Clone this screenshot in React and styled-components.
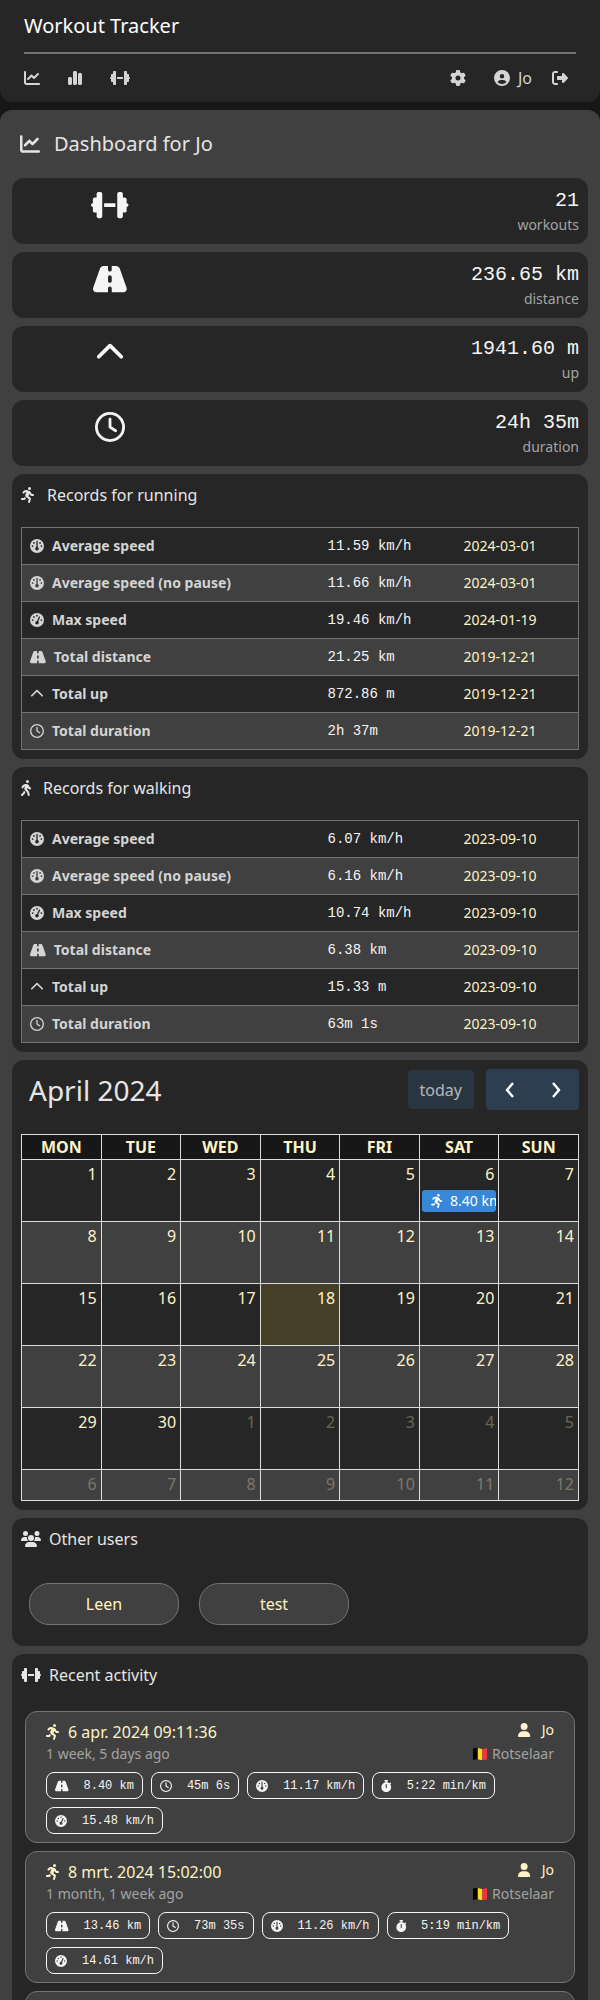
import React from 'react';
import styled, { createGlobalStyle, css } from 'styled-components';
import {
  FaChartLine, FaChartSimple, FaDumbbell, FaGear, FaCircleUser, FaRightFromBracket,
  FaRoad, FaChevronUp, FaRegClock, FaPersonRunning, FaPersonWalking, FaGauge,
  FaGaugeHigh, FaUser, FaStopwatch, FaUsers,
} from 'react-icons/fa6';

const c = {
  page: '#171717',
  panel: '#262626',
  surface: '#404040',
  line: '#737373',
  text: '#e5e5e5',
  soft: '#d4d4d4',
  muted: '#a3a3a3',
  bright: '#f5f5f5',
  link: '#fef3c7',
};
const mono = "'Liberation Mono', monospace";

const GlobalStyle = createGlobalStyle`
  * { box-sizing: border-box; }
  body {
    margin: 0;
    background: ${c.page};
    color: ${c.text};
    font: 16px/24px 'Noto Sans', sans-serif;
  }
  a { color: inherit; text-decoration: none; }
  h1, h2, h3, p { margin: 0; font-weight: 400; }
  svg { display: block; flex: none; }
  table { width: 100%; border-collapse: collapse; table-layout: fixed; }
`;

/* Width of each icon relative to its height; square unless listed. */
const ratios = new Map([
  [FaDumbbell, 1.25],
  [FaUsers, 1.25],
  [FaRoad, 1.125],
  [FaChartSimple, 0.875],
  [FaPersonRunning, 0.875],
  [FaUser, 0.875],
  [FaStopwatch, 0.875],
  [FaPersonWalking, 0.625],
]);
const GlyphBox = styled.span`
  flex: none;
  height: ${(p) => p.$size}px;
  aspect-ratio: ${(p) => p.$ratio};
  svg { width: 100%; height: 100%; }
`;
const Glyph = ({ icon: Icon, size = 16 }) => (
  <GlyphBox $size={size} $ratio={ratios.get(Icon) || 1}><Icon /></GlyphBox>
);

const Header = styled.header`
  background: ${c.panel};
  padding: 12px 24px 0;
  border-radius: 0 0 12px 12px;
`;
const Brand = styled.a`
  display: block;
  padding-bottom: 12px;
  font-size: 20px;
  line-height: 28px;
  color: #fff;
  border-bottom: 2px solid ${c.line};
`;
const Nav = styled.nav`
  display: flex;
  align-items: center;
  justify-content: space-between;
  height: 48px;
  color: ${c.soft};
`;
const NavGroup = styled.div`
  display: flex;
  align-items: center;
  gap: ${(p) => p.$gap || 28}px;
  padding-right: ${(p) => p.$end || 0}px;
`;
const NavLink = styled.a`
  display: flex;
  align-items: center;
  gap: 8px;
  margin-right: ${(p) => p.$after || 0}px;
`;

const Main = styled.main`
  margin-top: 8px;
  padding: 12px;
  background: ${c.surface};
  border-radius: 12px 12px 0 0;
  display: flex;
  flex-direction: column;
  gap: 8px;
`;
const PageTitle = styled.h2`
  display: flex;
  align-items: center;
  gap: 14px;
  height: 44px;
  margin-bottom: 4px;
  padding-left: 8px;
  font-size: 20px;
`;
const Panel = styled.section`
  background: ${c.panel};
  border-radius: 12px;
  padding: 9px;
`;
const PanelTitle = styled.h3`
  display: flex;
  align-items: center;
  gap: ${(p) => p.$gap || 8}px;
  margin-bottom: 20px;
  font-size: 16px;
`;

const Stat = styled(Panel)`
  display: grid;
  grid-template-columns: 1fr 2fr;
  column-gap: 24px;
  color: ${c.bright};
`;
const StatIcon = styled.div`
  display: flex;
  justify-content: center;
  align-items: center;
  height: 36px;
`;
const StatText = styled.div`
  display: flex;
  flex-direction: column;
  align-items: flex-end;
`;
const StatValue = styled.span`
  font: 20px/28px ${mono};
`;
const StatLabel = styled.span`
  font-size: 14px;
  line-height: 20px;
  color: ${c.muted};
`;

const RecordTable = styled.table`
  border: 1px solid ${c.line};
  font-size: 14px;
  line-height: 20px;
  tr { height: 37px; border-bottom: 1px solid ${c.line}; }
  tr:nth-child(even) { background: ${c.surface}; }
  th, td { padding: 0 8px; text-align: left; white-space: nowrap; }
`;
const RecordName = styled.th`
  color: ${c.soft};
  font-weight: 700;
`;
const RecordValue = styled.td`
  width: 136px;
  font-family: ${mono};
  color: ${c.bright};
`;
const RecordDate = styled.td`
  width: 123px;
  color: ${c.link};
`;
const IconLabel = styled.span`
  display: flex;
  align-items: center;
  gap: 8px;
`;

const CalHead = styled.div`
  display: flex;
  align-items: center;
  margin-bottom: 24px;
`;
const CalTitle = styled.h3`
  flex: 1;
  padding-left: 8px;
  font-size: 28px;
  line-height: 40px;
`;
const Today = styled.button`
  height: 39px;
  padding: 0 12px;
  margin-right: 12px;
  border: 0;
  border-radius: 4px;
  background: #2c3e50;
  color: #fff;
  opacity: .65;
  font: 16px/24px 'Noto Sans', sans-serif;
`;
const Arrows = styled.div`
  display: flex;
  height: 41px;
  padding-left: 1px;
  border-radius: 4px;
  background: #2c3e50;
`;
const Arrow = styled.button`
  display: grid;
  place-items: center;
  width: 46px;
  padding: 0;
  border: 0;
  background: none;
  color: #fff;
`;
const Calendar = styled.table`
  color: ${c.link};
  th, td { border: 1px solid #ddd; padding: 0; }
  th { height: 25px; background: ${c.page}; text-transform: uppercase; font-weight: 700; }
`;
const Week = styled.tr`
  height: ${(p) => (p.$short ? 31 : 62)}px;
  background: ${(p) => (p.$alt ? c.surface : 'transparent')};
`;
const Day = styled.td`
  vertical-align: top;
  text-align: right;
  ${(p) => p.$today && css`background: #474029;`}
`;
const DayNumber = styled.a`
  display: block;
  padding: 2px 4px 0;
  opacity: ${(p) => (p.$other ? 0.3 : 1)};
`;
const Event = styled.a`
  display: flex;
  align-items: center;
  gap: 7px;
  height: 22px;
  margin: 4px 2px 0;
  padding-left: 9px;
  overflow: hidden;
  white-space: nowrap;
  border-radius: 3px;
  background: #3788d8;
  color: #fff;
  font-size: 14px;
`;

const Users = styled.div`
  display: flex;
  flex-wrap: wrap;
  gap: 20px;
  padding: 12px 8px;
`;
const UserLink = styled.a`
  width: 150px;
  padding: 8px;
  text-align: center;
  border: 1px solid ${c.line};
  border-radius: 20px;
  background: ${c.surface};
  color: ${c.link};
`;

const ActivityList = styled.div`
  display: flex;
  flex-direction: column;
  gap: 8px;
  padding: 4px;
`;
const Activity = styled.article`
  min-height: 132px;
  padding: 8px 20px;
  border: 1px solid ${c.line};
  border-radius: 12px;
  background: ${c.surface};
`;
const Line = styled.div`
  display: flex;
  align-items: flex-start;
  justify-content: space-between;
  color: ${(p) => (p.$muted ? c.muted : c.link)};
  font-size: 14px;
  line-height: 20px;
`;
const ActivityTitle = styled.a`
  display: flex;
  align-items: center;
  gap: 8px;
  font-size: 16px;
  line-height: 24px;
`;
const Inline = styled.span`
  display: flex;
  align-items: center;
  gap: ${(p) => p.$gap}px;
`;
const Pills = styled.div`
  display: flex;
  flex-wrap: wrap;
  gap: 8px;
  margin-top: 8px;
`;
const Pill = styled.span`
  display: flex;
  align-items: center;
  gap: 15px;
  height: 27px;
  padding: 0 8px;
  border: 1px solid ${c.bright};
  border-radius: 8px;
  color: ${c.bright};
  font: 12px/16px ${mono};
`;

const Flag = () => (
  <svg width="14" height="14" viewBox="0 0 14 14" role="img" aria-label="Belgium">
    <path fill="#000" d="M0 1.6Q2.4.6 4.8 1.1V12.3Q2.4 12 0 13z" />
    <path fill="#fdda24" d="M4.8 1.1Q7 2 9.4 1.9V13Q7 13.2 4.8 12.3z" />
    <path fill="#ef3340" d="M9.4 1.9Q12 1.9 14 1.1V12.4Q12 13.1 9.4 13z" />
  </svg>
);

const Chevron = ({ d }) => (
  <svg width="24" height="24" viewBox="0 0 24 24" fill="none" stroke="currentColor" strokeWidth="2.4">
    <path d={d} />
  </svg>
);

const stats = [
  [FaDumbbell, '21', 'workouts'],
  [FaRoad, '236.65 km', 'distance'],
  [FaChevronUp, '1941.60 m', 'up'],
  [FaRegClock, '24h 35m', 'duration'],
];
const recordKinds = [
  [FaGauge, 'Average speed'],
  [FaGauge, 'Average speed (no pause)'],
  [FaGaugeHigh, 'Max speed'],
  [FaRoad, 'Total distance'],
  [FaChevronUp, 'Total up'],
  [FaRegClock, 'Total duration'],
];
const running = [
  ['11.59 km/h', '2024-03-01'], ['11.66 km/h', '2024-03-01'], ['19.46 km/h', '2024-01-19'],
  ['21.25 km', '2019-12-21'], ['872.86 m', '2019-12-21'], ['2h 37m', '2019-12-21'],
];
const walking = [
  ['6.07 km/h', '2023-09-10'], ['6.16 km/h', '2023-09-10'], ['10.74 km/h', '2023-09-10'],
  ['6.38 km', '2023-09-10'], ['15.33 m', '2023-09-10'], ['63m 1s', '2023-09-10'],
];
const activities = [
  ['6 apr. 2024 09:11:36', '1 week, 5 days ago', ['8.40 km', '45m 6s', '11.17 km/h', '5:22 min/km', '15.48 km/h']],
  ['8 mrt. 2024 15:02:00', '1 month, 1 week ago', ['13.46 km', '73m 35s', '11.26 km/h', '5:19 min/km', '14.61 km/h']],
];
const pillIcons = [FaRoad, FaRegClock, FaGauge, FaStopwatch, FaGaugeHigh];

function Records({ icon, title, rows }) {
  return (
    <Panel>
      <PanelTitle $gap={12}><Glyph icon={icon} />{title}</PanelTitle>
      <RecordTable>
        <tbody>
          {recordKinds.map(([kind, name], i) => (
            <tr key={name}>
              <RecordName scope="row"><IconLabel><Glyph icon={kind} size={14} />{name}</IconLabel></RecordName>
              <RecordValue>{rows[i][0]}</RecordValue>
              <RecordDate><a href="#workout">{rows[i][1]}</a></RecordDate>
            </tr>
          ))}
        </tbody>
      </RecordTable>
    </Panel>
  );
}

export default function App() {
  return (
    <>
      <GlobalStyle />
      <Header>
        <Brand href="#home">Workout Tracker</Brand>
        <Nav>
          <NavGroup>
            <NavLink href="#dashboard" aria-label="Dashboard"><Glyph icon={FaChartLine} /></NavLink>
            <NavLink href="#statistics" aria-label="Statistics"><Glyph icon={FaChartSimple} /></NavLink>
            <NavLink href="#workouts" aria-label="Workouts"><Glyph icon={FaDumbbell} /></NavLink>
          </NavGroup>
          <NavGroup $gap={20} $end={8}>
            <NavLink href="#settings" aria-label="Settings" $after={8}><Glyph icon={FaGear} /></NavLink>
            <NavLink href="#profile"><Glyph icon={FaCircleUser} />Jo</NavLink>
            <NavLink href="#logout" aria-label="Log out"><Glyph icon={FaRightFromBracket} /></NavLink>
          </NavGroup>
        </Nav>
      </Header>
      <Main>
        <PageTitle><Glyph icon={FaChartLine} size={20} />Dashboard for Jo</PageTitle>
        {stats.map(([icon, value, label]) => (
          <Stat key={label}>
            <StatIcon><Glyph icon={icon} size={30} /></StatIcon>
            <StatText><StatValue>{value}</StatValue><StatLabel>{label}</StatLabel></StatText>
          </Stat>
        ))}
        <Records icon={FaPersonRunning} title="Records for running" rows={running} />
        <Records icon={FaPersonWalking} title="Records for walking" rows={walking} />
        <Panel>
          <CalHead>
            <CalTitle>April 2024</CalTitle>
            <Today type="button" disabled>today</Today>
            <Arrows>
              <Arrow type="button" aria-label="Previous month"><Chevron d="M15 5 9 12l6 7" /></Arrow>
              <Arrow type="button" aria-label="Next month"><Chevron d="M9 5l6 7-6 7" /></Arrow>
            </Arrows>
          </CalHead>
          <Calendar>
            <thead>
              <tr>{['Mon', 'Tue', 'Wed', 'Thu', 'Fri', 'Sat', 'Sun'].map((d) => <th key={d}>{d}</th>)}</tr>
            </thead>
            <tbody>
              {[0, 1, 2, 3, 4, 5].map((w) => (
                <Week key={w} $alt={w % 2 === 1} $short={w === 5}>
                  {[1, 2, 3, 4, 5, 6, 7].map((d) => {
                    const n = w * 7 + d;
                    return (
                      <Day key={n} $today={n === 18}>
                        <DayNumber href="#day" $other={n > 30}>{n > 30 ? n - 30 : n}</DayNumber>
                        {n === 6 && <Event href="#workout"><Glyph icon={FaPersonRunning} size={14} />8.40 km</Event>}
                      </Day>
                    );
                  })}
                </Week>
              ))}
            </tbody>
          </Calendar>
        </Panel>
        <Panel>
          <PanelTitle><Glyph icon={FaUsers} />Other users</PanelTitle>
          <Users>
            <UserLink href="#leen">Leen</UserLink>
            <UserLink href="#test">test</UserLink>
          </Users>
        </Panel>
        <Panel>
          <PanelTitle><Glyph icon={FaDumbbell} />Recent activity</PanelTitle>
          <ActivityList>
            {activities.map(([date, ago, values]) => (
              <Activity key={date}>
                <Line>
                  <ActivityTitle href="#workout"><Glyph icon={FaPersonRunning} />{date}</ActivityTitle>
                  <a href="#jo"><Inline $gap={11}><Glyph icon={FaUser} size={14} />Jo</Inline></a>
                </Line>
                <Line $muted>
                  <span>{ago}</span>
                  <Inline $gap={5}><Flag />Rotselaar</Inline>
                </Line>
                <Pills>
                  {values.map((v, i) => (
                    <Pill key={v}><Glyph icon={pillIcons[i]} size={12} />{v}</Pill>
                  ))}
                </Pills>
              </Activity>
            ))}
            <Activity />
          </ActivityList>
        </Panel>
      </Main>
    </>
  );
}
